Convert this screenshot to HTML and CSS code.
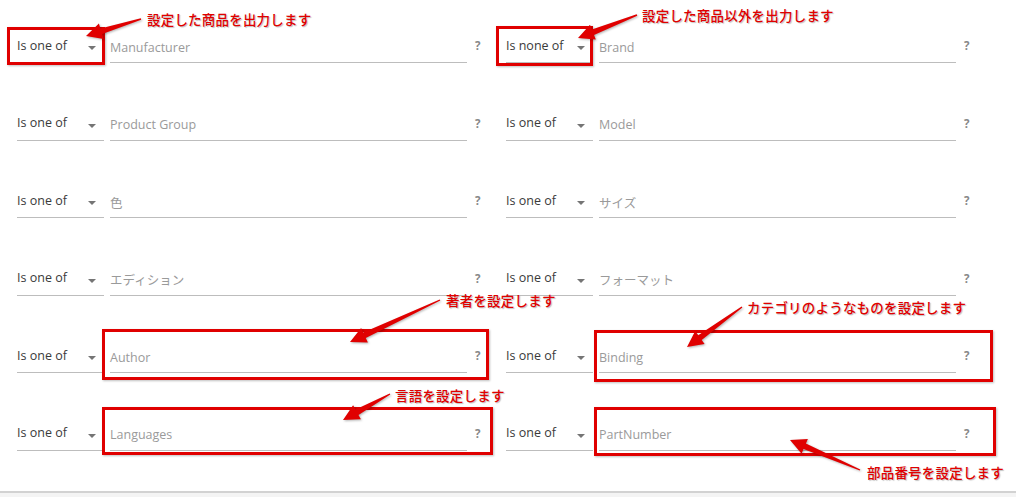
FILE: index.html
```html
<!DOCTYPE html>
<html>
<head>
  <title>Filters</title>
  <link rel="stylesheet" href="styles.css">
</head>
<body>
  <div class="page">
    <div class="filters">
      <div class="filter">
        <div class="op">Is one of<span class="caret"></span></div>
        <div class="value">Manufacturer</div>
        <div class="help">?</div>
      </div>
      <div class="filter">
        <div class="op">Is none of<span class="caret"></span></div>
        <div class="value">Brand</div>
        <div class="help">?</div>
      </div>
      <div class="filter">
        <div class="op">Is one of<span class="caret"></span></div>
        <div class="value">Product Group</div>
        <div class="help">?</div>
      </div>
      <div class="filter">
        <div class="op">Is one of<span class="caret"></span></div>
        <div class="value">Model</div>
        <div class="help">?</div>
      </div>
      <div class="filter">
        <div class="op">Is one of<span class="caret"></span></div>
        <div class="value">色</div>
        <div class="help">?</div>
      </div>
      <div class="filter">
        <div class="op">Is one of<span class="caret"></span></div>
        <div class="value">サイズ</div>
        <div class="help">?</div>
      </div>
      <div class="filter">
        <div class="op">Is one of<span class="caret"></span></div>
        <div class="value">エディション</div>
        <div class="help">?</div>
      </div>
      <div class="filter">
        <div class="op">Is one of<span class="caret"></span></div>
        <div class="value">フォーマット</div>
        <div class="help">?</div>
      </div>
      <div class="filter">
        <div class="op">Is one of<span class="caret"></span></div>
        <div class="value">Author</div>
        <div class="help">?</div>
      </div>
      <div class="filter">
        <div class="op">Is one of<span class="caret"></span></div>
        <div class="value">Binding</div>
        <div class="help">?</div>
      </div>
      <div class="filter">
        <div class="op">Is one of<span class="caret"></span></div>
        <div class="value">Languages</div>
        <div class="help">?</div>
      </div>
      <div class="filter">
        <div class="op">Is one of<span class="caret"></span></div>
        <div class="value">PartNumber</div>
        <div class="help">?</div>
      </div>
    </div>
    <div class="footer"></div>

    <!-- annotations drawn over the screenshot -->
    <div class="mark mark-op1"></div>
    <div class="mark mark-op2"></div>
    <div class="mark mark-author"></div>
    <div class="mark mark-binding"></div>
    <div class="mark mark-lang"></div>
    <div class="mark mark-part"></div>

    <svg class="arrows" id="arrows" width="1024" height="497"></svg>

    <span class="note note-op1">設定した商品を出力します</span>
    <span class="note note-op2">設定した商品以外を出力します</span>
    <span class="note note-author">著者を設定します</span>
    <span class="note note-binding">カテゴリのようなものを設定します</span>
    <span class="note note-lang">言語を設定します</span>
    <span class="note note-part">部品番号を設定します</span>
  </div>

  <script>
    // tail x, tail y, tip x, tip y
    var arrows = [
      [141, 19, 86, 36],
      [637, 15, 578, 38],
      [440, 300, 350, 342],
      [742, 307, 687, 347],
      [390, 394, 343, 420],
      [860, 470, 790, 440]
    ];

    function arrowPoints(tx, ty, hx, hy) {
      let dx = hx - tx, dy = hy - ty;
      let len = Math.sqrt(dx * dx + dy * dy);
      dx /= len; dy /= len;
      let nx = -dy, ny = dx;
      let bx = hx - dx * 16, by = hy - dy * 16;
      let pts = [
        [tx + nx * 0.7, ty + ny * 0.7],
        [bx + nx * 3, by + ny * 3],
        [bx + nx * 8, by + ny * 8],
        [hx, hy],
        [bx - nx * 8, by - ny * 8],
        [bx - nx * 3, by - ny * 3],
        [tx - nx * 0.7, ty - ny * 0.7]
      ];
      return pts.map(function(p) { return p[0].toFixed(1) + ',' + p[1].toFixed(1); }).join(' ');
    }

    let svg = document.getElementById('arrows');
    arrows.forEach(function(a) {
      let poly = document.createElementNS('http://www.w3.org/2000/svg', 'polygon');
      poly.setAttribute('points', arrowPoints(a[0], a[1], a[2], a[3]));
      svg.appendChild(poly);
    });
  </script>
</body>
</html>
```

FILE: styles.css
```css
body {
  margin: 0;
  background: #fff;
  font-family: "Open Sans", "Noto Sans CJK JP", sans-serif;
  font-size: 12.5px;
}
.page {
  position: relative;
  width: 1024px;
  height: 497px;
  overflow: hidden;
}
.filters {
  display: grid;
  grid-template-columns: 489px 489px;
  row-gap: 45.6px;
  padding: 31px 0 0 17px;
}
.filter {
  display: flex;
  height: 32px;
}
.op {
  width: 87px;
  box-sizing: border-box;
  border-bottom: 1px solid #bdbdbd;
  display: flex;
  align-items: center;
  padding-bottom: 3px;
  color: #3a3a3a;
  position: relative;
}
.caret {
  position: absolute;
  right: 8px;
  top: 15px;
  width: 0;
  height: 0;
  border-left: 4.5px solid transparent;
  border-right: 4.5px solid transparent;
  border-top: 4.5px solid #757575;
}
.value {
  width: 357px;
  margin-left: 6px;
  box-sizing: border-box;
  border-bottom: 1px solid #bdbdbd;
  display: flex;
  align-items: center;
  padding-top: 1px;
  color: #9a9a9a;
}
.help {
  width: 39px;
  padding-left: 8px;
  box-sizing: border-box;
  display: flex;
  align-items: center;
  padding-bottom: 3px;
  color: #888;
  font-weight: bold;
  font-size: 11.5px;
}
.footer {
  margin-top: 40px;
  width: 1016px;
  height: 10px;
  border-top: 2px solid #d2d2d2;
  background: #f4f4f4;
}
.mark {
  position: absolute;
  border: 3.5px solid #e00000;
  box-shadow: 1px 1px 2px rgba(0, 0, 0, 0.25);
}
.mark-op1 { left: 7px; top: 27px; width: 92px; height: 32px; }
.mark-op2 { left: 496px; top: 26px; width: 91px; height: 34px; }
.mark-author { left: 102px; top: 329px; width: 381px; height: 45px; }
.mark-binding { left: 594px; top: 330px; width: 393px; height: 46px; }
.mark-lang { left: 102px; top: 407px; width: 385px; height: 42px; }
.mark-part { left: 594px; top: 407px; width: 396px; height: 43px; }
.arrows {
  position: absolute;
  left: 0;
  top: 0;
  fill: #e00000;
  filter: drop-shadow(1px 1px 1px rgba(0, 0, 0, 0.3));
}
.note {
  position: absolute;
  color: #e00000;
  font-family: "Noto Sans CJK JP", sans-serif;
  font-size: 13.5px;
  font-weight: 500;
  letter-spacing: 0.2px;
  line-height: 16px;
  white-space: nowrap;
  text-shadow: 1px 1px 1px rgba(0, 0, 0, 0.25);
}
.note-op1 { left: 147px; top: 11px; }
.note-op2 { left: 642px; top: 7px; }
.note-author { left: 446px; top: 292px; }
.note-binding { left: 747px; top: 299px; }
.note-lang { left: 395px; top: 387px; }
.note-part { left: 867px; top: 464px; }
```
